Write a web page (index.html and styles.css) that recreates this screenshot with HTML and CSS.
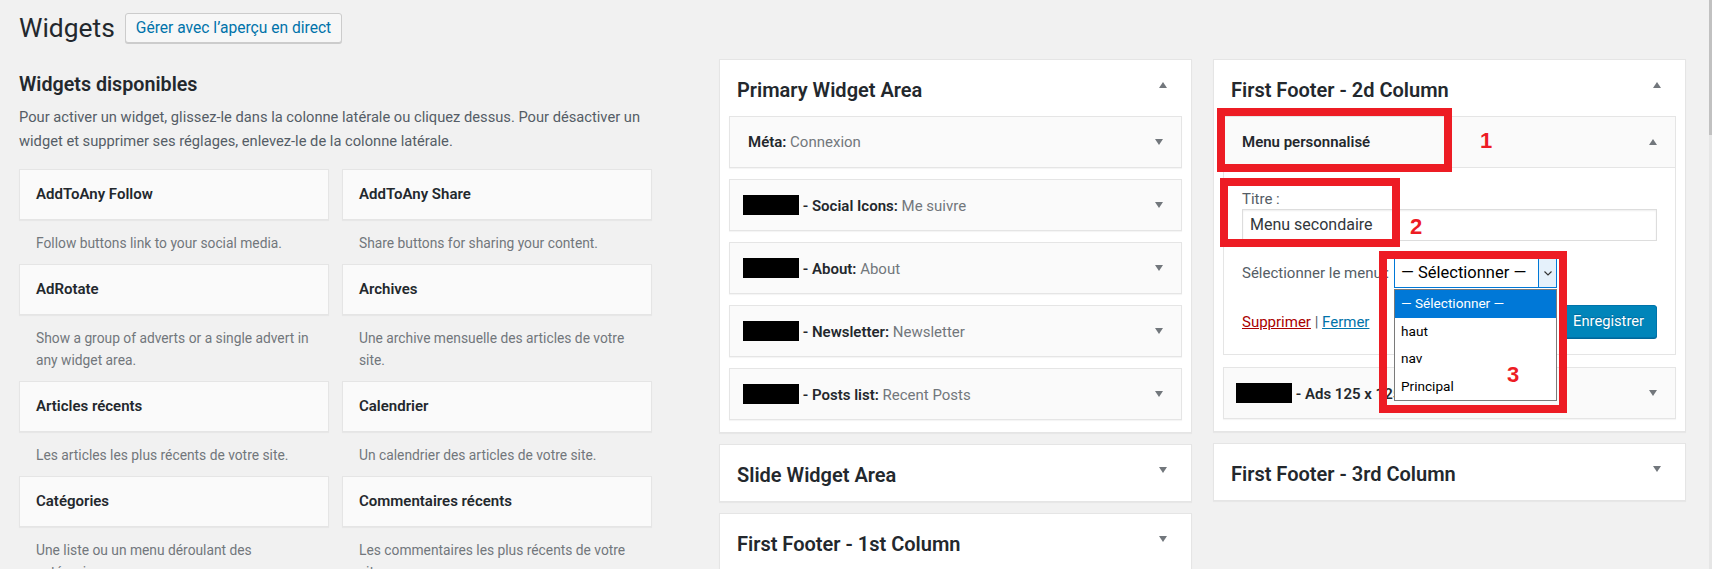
FILE: index.html
```html
<!DOCTYPE html>
<html lang="fr">
<head>
<meta charset="utf-8">
<title>Widgets</title>
<link rel="stylesheet" href="styles.css">
</head>
<body>
<div class="page">
  <div class="left">
    <header class="head">
      <h1>Widgets</h1>
      <a class="page-btn">Gérer avec l’aperçu en direct</a>
    </header>
    <h2 class="avail-title">Widgets disponibles</h2>
    <p class="intro">Pour activer un widget, glissez-le dans la colonne latérale ou cliquez dessus. Pour désactiver un widget et supprimer ses réglages, enlevez-le de la colonne latérale.</p>
    <div class="avail-grid">
      <div class="avail"><div class="avail-card">AddToAny Follow</div><p class="avail-desc">Follow buttons link to your social media.</p></div>
      <div class="avail"><div class="avail-card">AddToAny Share</div><p class="avail-desc">Share buttons for sharing your content.</p></div>
      <div class="avail"><div class="avail-card">AdRotate</div><p class="avail-desc">Show a group of adverts or a single advert in any widget area.</p></div>
      <div class="avail"><div class="avail-card">Archives</div><p class="avail-desc">Une archive mensuelle des articles de votre site.</p></div>
      <div class="avail"><div class="avail-card">Articles récents</div><p class="avail-desc">Les articles les plus récents de votre site.</p></div>
      <div class="avail"><div class="avail-card">Calendrier</div><p class="avail-desc">Un calendrier des articles de votre site.</p></div>
      <div class="avail"><div class="avail-card">Catégories</div><p class="avail-desc">Une liste ou un menu déroulant des catégories.</p></div>
      <div class="avail"><div class="avail-card">Commentaires récents</div><p class="avail-desc">Les commentaires les plus récents de votre site.</p></div>
    </div>
  </div>

  <div class="col">
    <div class="area">
      <div class="area-head"><h2>Primary Widget Area</h2><span class="tri tri-up"></span></div>
      <div class="area-body">
        <div class="wid"><span class="wid-title">Méta: <span class="wid-sub">Connexion</span></span><span class="tri tri-down"></span></div>
        <div class="wid"><span class="wid-title"><span class="redact"></span> - Social Icons: <span class="wid-sub">Me suivre</span></span><span class="tri tri-down"></span></div>
        <div class="wid"><span class="wid-title"><span class="redact"></span> - About: <span class="wid-sub">About</span></span><span class="tri tri-down"></span></div>
        <div class="wid"><span class="wid-title"><span class="redact"></span> - Newsletter: <span class="wid-sub">Newsletter</span></span><span class="tri tri-down"></span></div>
        <div class="wid"><span class="wid-title"><span class="redact"></span> - Posts list: <span class="wid-sub">Recent Posts</span></span><span class="tri tri-down"></span></div>
      </div>
    </div>
    <div class="area"><div class="area-head"><h2>Slide Widget Area</h2><span class="tri tri-down"></span></div></div>
    <div class="area"><div class="area-head"><h2>First Footer - 1st Column</h2><span class="tri tri-down"></span></div></div>
  </div>

  <div class="col col-right">
    <div class="area">
      <div class="area-head"><h2>First Footer - 2d Column</h2><span class="tri tri-up"></span></div>
      <div class="area-body">
        <div class="wid-open">
          <div class="wid wid-top"><span class="wid-title">Menu personnalisé</span><span class="tri tri-up"></span></div>
          <div class="wid-inside">
            <div class="field-label">Titre :</div>
            <div class="input">Menu secondaire</div>
            <div class="select-row">
              <span class="select-label">Sélectionner le menu :</span>
              <div class="select">
                <span class="select-val">— Sélectionner —</span>
                <span class="select-btn"><svg width="8" height="5" viewBox="0 0 8 5"><path d="M0.5 0.5 L4 4 L7.5 0.5" fill="none" stroke="#333" stroke-width="1.1"/></svg></span>
                <ul class="select-list">
                  <li class="on">— Sélectionner —</li>
                  <li>haut</li>
                  <li>nav</li>
                  <li>Principal</li>
                </ul>
              </div>
            </div>
            <div class="actions">
              <span class="links"><a class="del">Supprimer</a> | <a class="close">Fermer</a></span>
              <a class="save">Enregistrer</a>
            </div>
          </div>
        </div>
        <div class="wid"><span class="wid-title"><span class="redact redact-ads"></span> - Ads 125 x 125</span><span class="tri tri-down"></span></div>
      </div>
    </div>
    <div class="area"><div class="area-head"><h2>First Footer - 3rd Column</h2><span class="tri tri-down"></span></div></div>
  </div>

  <div class="mark mark-1"></div>
  <div class="mark mark-2"></div>
  <div class="mark mark-3"></div>
  <span class="num num-1">1</span>
  <span class="num num-2">2</span>
  <span class="num num-3">3</span>
  <div class="scrollbar"><div class="scroll-thumb"></div></div>
</div>
</body>
</html>
```

FILE: styles.css
```css
* { box-sizing: border-box; }

html, body {
  margin: 0;
  padding: 0;
  background: #f1f1f1;
  font-family: Roboto, "Open Sans", sans-serif;
  color: #23282d;
  overflow: hidden;
}

.page {
  position: relative;
  display: flex;
  align-items: flex-start;
  width: 1712px;
  height: 569px;
}

/* ---------- left : available widgets ---------- */
.left {
  flex: none;
  width: 719px;
  padding-left: 19px;
}

.head {
  display: flex;
  align-items: center;
  padding-top: 13px;
  height: 43px;
}

.head h1 {
  margin: 0;
  font-size: 26.4px;
  font-weight: 400;
  line-height: 30px;
}

.page-btn {
  margin-left: 10px;
  height: 30px;
  line-height: 28px;
  padding: 0 10px;
  font-size: 15.6px;
  color: #0073aa;
  background: #f7f7f7;
  border: 1px solid #ccc;
  border-radius: 3px;
  box-shadow: 0 1px 0 #ccc;
}

.avail-title {
  margin: 29px 0 0;
  font-size: 19.7px;
  font-weight: 600;
  line-height: 26px;
}

.intro {
  width: 640px;
  margin: 8px 0 16px;
  font-size: 14.7px;
  line-height: 23.5px;
  color: #555d66;
}

.avail-grid {
  display: grid;
  grid-template-columns: 310px 310px;
  column-gap: 13px;
}

.avail-card {
  height: 51px;
  line-height: 49px;
  padding-left: 16px;
  font-size: 15px;
  font-weight: 600;
  background: #fafafa;
  border: 1px solid #e5e5e5;
  box-shadow: 0 1px 1px rgba(0,0,0,.04);
}

.avail-desc {
  margin: 12px 0 10px;
  padding: 0 13px 0 17px;
  font-size: 13.8px;
  line-height: 22px;
  color: #72777c;
}

/* ---------- sidebars ---------- */
.col {
  flex: none;
  width: 473px;
  margin-top: 59px;
}

.col-right { margin-left: 21px; }

.area {
  background: #fff;
  border: 1px solid #e5e5e5;
  box-shadow: 0 1px 1px rgba(0,0,0,.04);
  margin-bottom: 11px;
}

.area-head {
  display: flex;
  justify-content: space-between;
  align-items: flex-start;
  height: 56px;
  padding: 16px 24px 0 17px;
}

.area-head h2 {
  margin: 0;
  font-size: 20px;
  font-weight: 600;
  line-height: 28px;
}

.area-head .tri { margin-top: 6px; }

.area-body { padding: 0 9px 12px; }

.tri {
  flex: none;
  width: 0;
  height: 0;
  border-left: 4.5px solid transparent;
  border-right: 4.5px solid transparent;
}

.tri-up { border-bottom: 6px solid #72777c; }
.tri-down { border-top: 6px solid #72777c; }

.wid {
  display: flex;
  align-items: center;
  justify-content: space-between;
  height: 52px;
  padding: 0 18px 0 18px;
  margin-bottom: 11px;
  background: #fafafa;
  border: 1px solid #e5e5e5;
  box-shadow: 0 1px 1px rgba(0,0,0,.04);
  font-size: 15px;
  font-weight: 600;
  white-space: nowrap;
}

.wid:last-child { margin-bottom: 0; }

.wid-sub {
  font-weight: 400;
  color: #72777c;
}

.redact {
  display: inline-block;
  width: 56px;
  height: 20px;
  margin-left: -5px;
  background: #000;
  vertical-align: -4px;
}

.redact-ads { margin-left: -6px; }

.wid-open { margin-bottom: 12px; }

.wid-open .wid-top {
  margin-bottom: 0;
  box-shadow: none;
}

.wid-inside {
  padding: 21px 18px 16px;
  background: #fff;
  border: 1px solid #e5e5e5;
  border-top: none;
  font-size: 15px;
}

.field-label {
  line-height: 20px;
  color: #555d66;
}

.input {
  height: 32px;
  line-height: 30px;
  padding: 0 7px;
  border: 1px solid #ddd;
  box-shadow: inset 0 1px 2px rgba(0,0,0,.07);
  font-size: 16px;
  color: #32373c;
}

.select-row {
  display: flex;
  align-items: center;
  margin-top: 17px;
  height: 30px;
}

.select-label {
  flex: none;
  width: 152px;
  overflow: hidden;
  white-space: nowrap;
  color: #555d66;
}

.select {
  position: relative;
  display: flex;
  width: 163px;
  height: 30px;
  border: 1px solid #0078d7;
  background: #fff;
}

.select-val {
  flex: 1;
  padding-left: 6px;
  line-height: 28px;
  font-size: 16.5px;
  color: #000;
  white-space: nowrap;
}

.select-btn {
  flex: none;
  width: 18px;
  display: flex;
  align-items: center;
  justify-content: center;
  background: #e5f1fb;
  border-left: 1px solid #0078d7;
}

.select-list {
  position: absolute;
  left: -1px;
  top: 30px;
  width: 163px;
  margin: 0;
  padding: 0;
  list-style: none;
  background: #fff;
  border: 1px solid #7a7a7a;
  font-size: 13.6px;
  z-index: 2;
}

.select-list li {
  height: 27.5px;
  line-height: 27.5px;
  padding-left: 6px;
  color: #000;
}

.select-list li.on {
  background: #0078d7;
  color: #fff;
}

.actions {
  display: flex;
  justify-content: space-between;
  align-items: center;
  margin-top: 17px;
}

.links { color: #555d66; }
.del { color: #a00; text-decoration: underline; }
.close { color: #0073aa; text-decoration: underline; }

.save {
  height: 33px;
  line-height: 30px;
  padding: 0 12px;
  font-size: 14.7px;
  color: #fff;
  background: #0085ba;
  border: 1px solid #0073aa;
  border-radius: 3px;
  box-shadow: 0 1px 0 #006799;
  text-shadow: 0 -1px 1px #006799;
}

/* ---------- annotations ---------- */
.mark {
  position: absolute;
  border: 8px solid #ed1c24;
  z-index: 5;
}

.mark-1 { left: 1217px; top: 108px; width: 235px; height: 64px; }
.mark-2 { left: 1220px; top: 178px; width: 180px; height: 69px; }
.mark-3 { left: 1379px; top: 251px; width: 188px; height: 162px; }

.num {
  position: absolute;
  font-family: "Liberation Sans", Arial, sans-serif;
  font-weight: 700;
  font-size: 22px;
  line-height: 22px;
  color: #ed1c24;
  z-index: 5;
}

.num-1 { left: 1480px; top: 130px; }
.num-2 { left: 1410px; top: 216px; }
.num-3 { left: 1507px; top: 364px; }

.scrollbar {
  position: absolute;
  right: 0;
  top: 0;
  width: 3px;
  height: 569px;
  background: #e6e6e6;
}

.scroll-thumb {
  height: 135px;
  background: #c1c1c1;
}
```
